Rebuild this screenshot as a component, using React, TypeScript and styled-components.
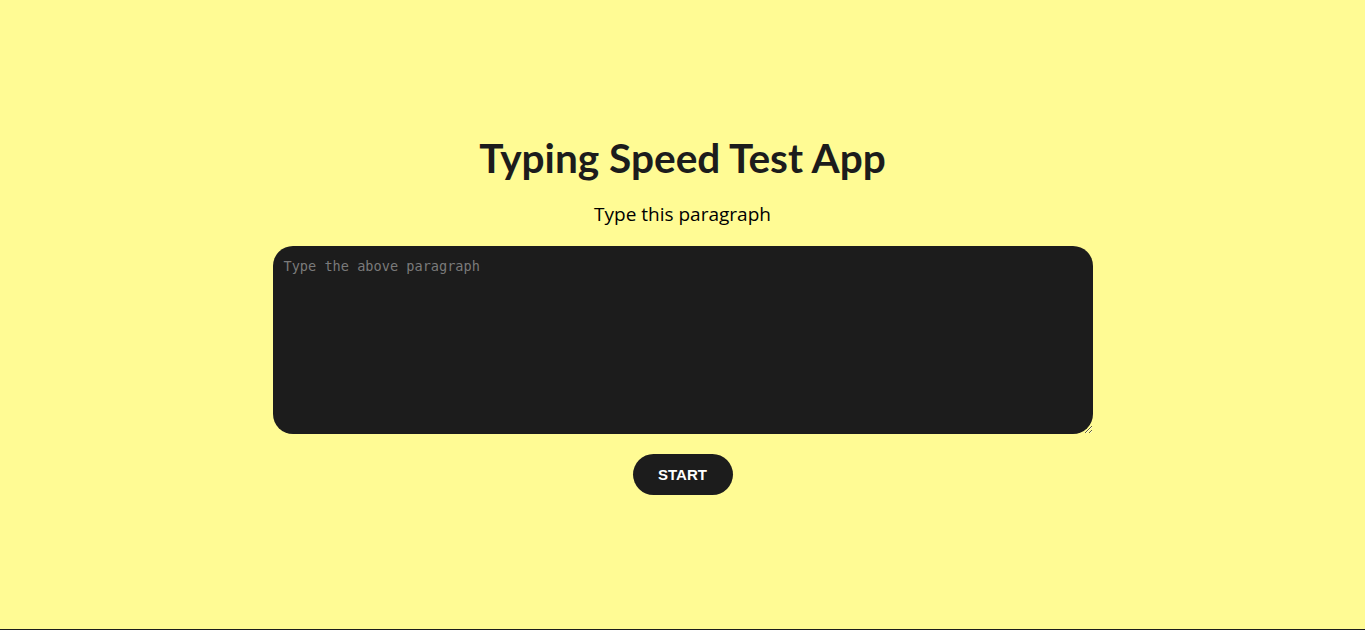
import React from "react";
import styled, { createGlobalStyle } from "styled-components";

const Global = createGlobalStyle`
  html, body { margin: 0; padding: 0; }
  body { background: #fffb94; font-family: "Open Sans", "Noto Sans", sans-serif; }
`;

const Page = styled.main`
  min-height: 629px;
  display: flex;
  flex-direction: column;
  align-items: center;
  justify-content: center;
  color: #1c1c1c;
`;

const Title = styled.h1`
  margin: 0;
  font-family: Lato, "Open Sans", sans-serif;
  font-weight: 700;
  font-size: 40.6px;
  line-height: 48px;
  color: #1c1c1c;
`;

const Subtitle = styled.p`
  margin: 19px 0 19px;
  font-family: "Open Sans", sans-serif;
  font-size: 19px;
  line-height: 26px;
  color: #000;
`;

const Area = styled.textarea`
  box-sizing: border-box;
  width: 820px;
  height: 188px;
  background: #1c1c1c;
  border: none;
  border-radius: 20px;
  padding: 12px 11px;
  color: #e0e0e0;
  font-family: "DejaVu Sans Mono", "Liberation Mono", monospace;
  font-size: 13.6px;
  outline: none;
  resize: vertical;
  &::placeholder { color: #7a7a7a; }
`;

const Button = styled.button`
  margin-top: 20px;
  width: 100px;
  height: 41px;
  border: none;
  border-radius: 21px;
  background: #1c1c1c;
  color: #fff;
  font-family: "Liberation Sans", Arial, sans-serif;
  font-weight: 700;
  font-size: 15px;
  cursor: pointer;
`;

const Footer = styled.footer`
  height: 40px;
  background: #1c1c1c;
`;

export default function App() {
  return (
    <>
      <Global />
      <Page>
        <Title>Typing Speed Test App</Title>
        <Subtitle>Type this paragraph</Subtitle>
        <Area placeholder="Type the above paragraph" />
        <Button>START</Button>
      </Page>
      <Footer />
    </>
  );
}
